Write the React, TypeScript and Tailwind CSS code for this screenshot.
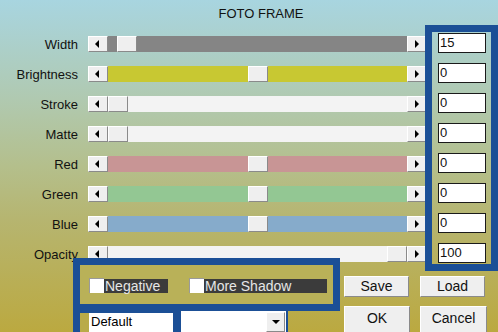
import React from "react";

type Row = { label: string; track: string; thumb: number; value: string };

const rows: Row[] = [
  { label: "Width", track: "bg-[#858585]", thumb: 9, value: "15" },
  { label: "Brightness", track: "bg-[#c8c832]", thumb: 140, value: "0" },
  { label: "Stroke", track: "bg-[#f3f3f3]", thumb: 0, value: "0" },
  { label: "Matte", track: "bg-[#f3f3f3]", thumb: 0, value: "0" },
  { label: "Red", track: "bg-[#c89595]", thumb: 140, value: "0" },
  { label: "Green", track: "bg-[#93c793]", thumb: 140, value: "0" },
  { label: "Blue", track: "bg-[#86abcb]", thumb: 140, value: "0" },
  { label: "Opacity", track: "bg-[#f3f3f3]", thumb: 279, value: "100" },
];

const raised =
  "bg-[#efefef] border border-t-white border-l-white border-r-[#8a8a8a] border-b-[#8a8a8a]";

function Slider({ track, thumb }: { track: string; thumb: number }) {
  return (
    <div className="ml-[10px] flex h-[16px] w-[339px] shrink-0">
      <div className={`${raised} w-[20px] h-[16px] flex items-center justify-center pr-[2px]`}>
        <span className="w-0 h-0 border-y-[4px] border-y-transparent border-r-[4px] border-r-black" />
      </div>
      <div className={`${track} w-[299px] h-[16px] flex`}>
        <div className={`${raised} w-[20px] h-[16px] shrink-0`} style={{ marginLeft: thumb }} />
      </div>
      <div className={`${raised} w-[20px] h-[16px] flex items-center justify-center`}>
        <span className="w-0 h-0 border-y-[4px] border-y-transparent border-l-[4px] border-l-black" />
      </div>
    </div>
  );
}

function Check({ label, width }: { label: string; width: string }) {
  return (
    <div className="flex items-start">
      <span className="w-[15px] h-[15px] bg-white border-l border-t border-[#9a9a9a]" />
      <span className={`${width} mt-[1px] h-[14px] bg-[#3b3b3b] text-[#e6e6e6] text-[14px] leading-[14px] pl-[1px]`}>
        {label}
      </span>
    </div>
  );
}

export default function App() {
  return (
    <div className="w-[498px] h-[332px] overflow-hidden text-[13px] text-[#111] font-['Liberation_Sans',Arial,sans-serif] bg-[linear-gradient(180deg,#a8d5e0_0%,#b0c9b0_30%,#b4bf8c_50%,#b6b570_66%,#bba940_100%)]">
      <div className="h-[25px] pt-[6px] pl-[24px] text-center leading-[15px]">FOTO FRAME</div>

      <div className="flex">
        {/* sliders */}
        <div className="w-[425px] overflow-hidden pt-[4px]">
          {rows.map(r => (
            <div key={r.label} className="h-[30px] flex items-center">
              <div className="w-[78px] shrink-0 text-right leading-[15px]">{r.label}</div>
              <Slider track={r.track} thumb={r.thumb} />
            </div>
          ))}
        </div>

        {/* values */}
        <div className="w-[73px] h-[246px] border-[7px] border-[#1b4f96] pt-[1px] pl-[6px] flex flex-col gap-[10px]">
          {rows.map(r => (
            <div key={r.label} className="w-[48px] h-[20px] bg-white border border-[#1a1a1a] pl-[1px] leading-[18px]">
              {r.value}
            </div>
          ))}
        </div>
      </div>

      <div className="relative -mt-[13px] flex">
        <div className="ml-[73px] w-[267px]">
          <div className="bg-[#1b4f96] p-[7px]">
            <div className="h-[39px] bg-[#b9b158] flex items-start pt-[13px] pl-[9px] gap-[21px]">
              <Check label="Negative" width="w-[64px]" />
              <Check label="More Shadow" width="w-[123px]" />
            </div>
          </div>
          <div className="w-[215px] h-[30px] bg-[#1b4f96] pl-[7px] flex items-start">
            <div className="mt-[2px] w-[9px] h-[30px] bg-[#b9ab48]" />
            <div className="mt-[2px] w-[84px] h-[30px] bg-white pl-[2px] pt-[1px] leading-[15px] text-black">Default</div>
            <div className="ml-[8px] w-[105px] h-[30px] bg-white flex justify-end pr-[1px] pt-[1px]">
              <div className={`${raised} w-[19px] h-[20px] flex items-center justify-center`}>
                <span className="w-0 h-0 border-x-[4px] border-x-transparent border-t-[4px] border-t-black" />
              </div>
            </div>
          </div>
        </div>

        <div className="ml-[4px] pt-[18px] flex flex-col gap-[9px] text-[14px]">
          <div className="flex gap-[11px]">
            <button className={`${raised} w-[65px] h-[21px] leading-[19px] text-center`}>Save</button>
            <button className={`${raised} w-[65px] h-[21px] leading-[19px] text-center`}>Load</button>
          </div>
          <div className="flex gap-[10px]">
            <button className={`${raised} w-[66px] h-[30px] pb-[6px] text-center`}>OK</button>
            <button className={`${raised} w-[67px] h-[30px] pb-[6px] text-center`}>Cancel</button>
          </div>
        </div>
      </div>
    </div>
  );
}
